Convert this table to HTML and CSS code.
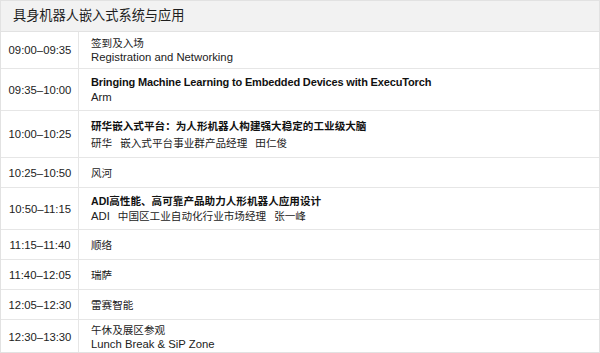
FILE: index.html
```html
<!DOCTYPE html>
<html lang="zh">
<head>
<meta charset="utf-8">
<link rel="stylesheet" href="styles.css">
</head>
<body>
<div class="agenda">
  <div class="head">具身机器人嵌入式系统与应用</div>
  <div class="row two">
    <div class="time">09:00–09:35</div>
    <div class="info"><div>签到及入场</div><div class="en">Registration and Networking</div></div>
  </div>
  <div class="row talk">
    <div class="time">09:35–10:00</div>
    <div class="info"><div class="title latin">Bringing Machine Learning to Embedded Devices with ExecuTorch</div><div class="en">Arm</div></div>
  </div>
  <div class="row talk wide">
    <div class="time">10:00–10:25</div>
    <div class="info"><div class="title">研华嵌入式平台：为人形机器人构建强大稳定的工业级大脑</div><div>研华<span class="sp"> </span>嵌入式平台事业群产品经理<span class="sp"> </span>田仁俊</div></div>
  </div>
  <div class="row one">
    <div class="time">10:25–10:50</div>
    <div class="info"><div>风河</div></div>
  </div>
  <div class="row talk">
    <div class="time">10:50–11:15</div>
    <div class="info"><div class="title">ADI高性能、高可靠产品助力人形机器人应用设计</div><div><span class="en">ADI</span><span class="sp"> </span>中国区工业自动化行业市场经理<span class="sp"> </span>张一峰</div></div>
  </div>
  <div class="row one">
    <div class="time">11:15–11:40</div>
    <div class="info"><div>顺络</div></div>
  </div>
  <div class="row one">
    <div class="time">11:40–12:05</div>
    <div class="info"><div>瑞萨</div></div>
  </div>
  <div class="row one">
    <div class="time">12:05–12:30</div>
    <div class="info"><div>雷赛智能</div></div>
  </div>
  <div class="row two last">
    <div class="time">12:30–13:30</div>
    <div class="info"><div>午休及展区参观</div><div class="en">Lunch Break &amp; SiP Zone</div></div>
  </div>
</div>
</body>
</html>
```
FILE: styles.css
```css
html, body {
  margin: 0;
  padding: 0;
  background: #ffffff;
}
body {
  font-family: "Liberation Sans", "Noto Sans CJK SC", sans-serif;
  color: #222222;
  font-size: 10.6px;
}
.agenda {
  width: 600px;
  height: 353px;
  box-sizing: border-box;
  border: 1px solid #e2e2e2;
  overflow: hidden;
}
.head {
  height: 31px;
  box-sizing: border-box;
  background: #f2f2f2;
  border-bottom: 1px solid #e2e2e2;
  font-size: 13.2px;
  line-height: 30px;
  padding-left: 12px;
  color: #1e1e1e;
}
.row {
  display: grid;
  grid-template-columns: 78px 1fr;
  border-bottom: 1px solid #e6e6e6;
  line-height: 14px;
}
.row.last {
  border-bottom: none;
}
.time {
  border-right: 1px solid #e6e6e6;
  display: flex;
  align-items: center;
  justify-content: center;
  padding-left: 1px;
  font-size: 11.3px;
}
.info {
  padding: 0 12px;
  display: flex;
  flex-direction: column;
  justify-content: center;
}
.en {
  font-size: 11.3px;
}
.sp {
  display: inline-block;
  width: 8px;
}
.title {
  font-weight: bold;
  color: #111111;
}
.title.latin {
  font-size: 11px;
  letter-spacing: -0.15px;
}
.row.one .info { height: 29px; }
.row.two .info { height: 36px; }
.row.talk .info { height: 41px; }
.row.talk .info .title { margin-bottom: 1px; }
.row.wide .info { height: 46px; }
.row.wide .info .title { margin-bottom: 3px; }
.row.last .info { height: 33px; }
```
